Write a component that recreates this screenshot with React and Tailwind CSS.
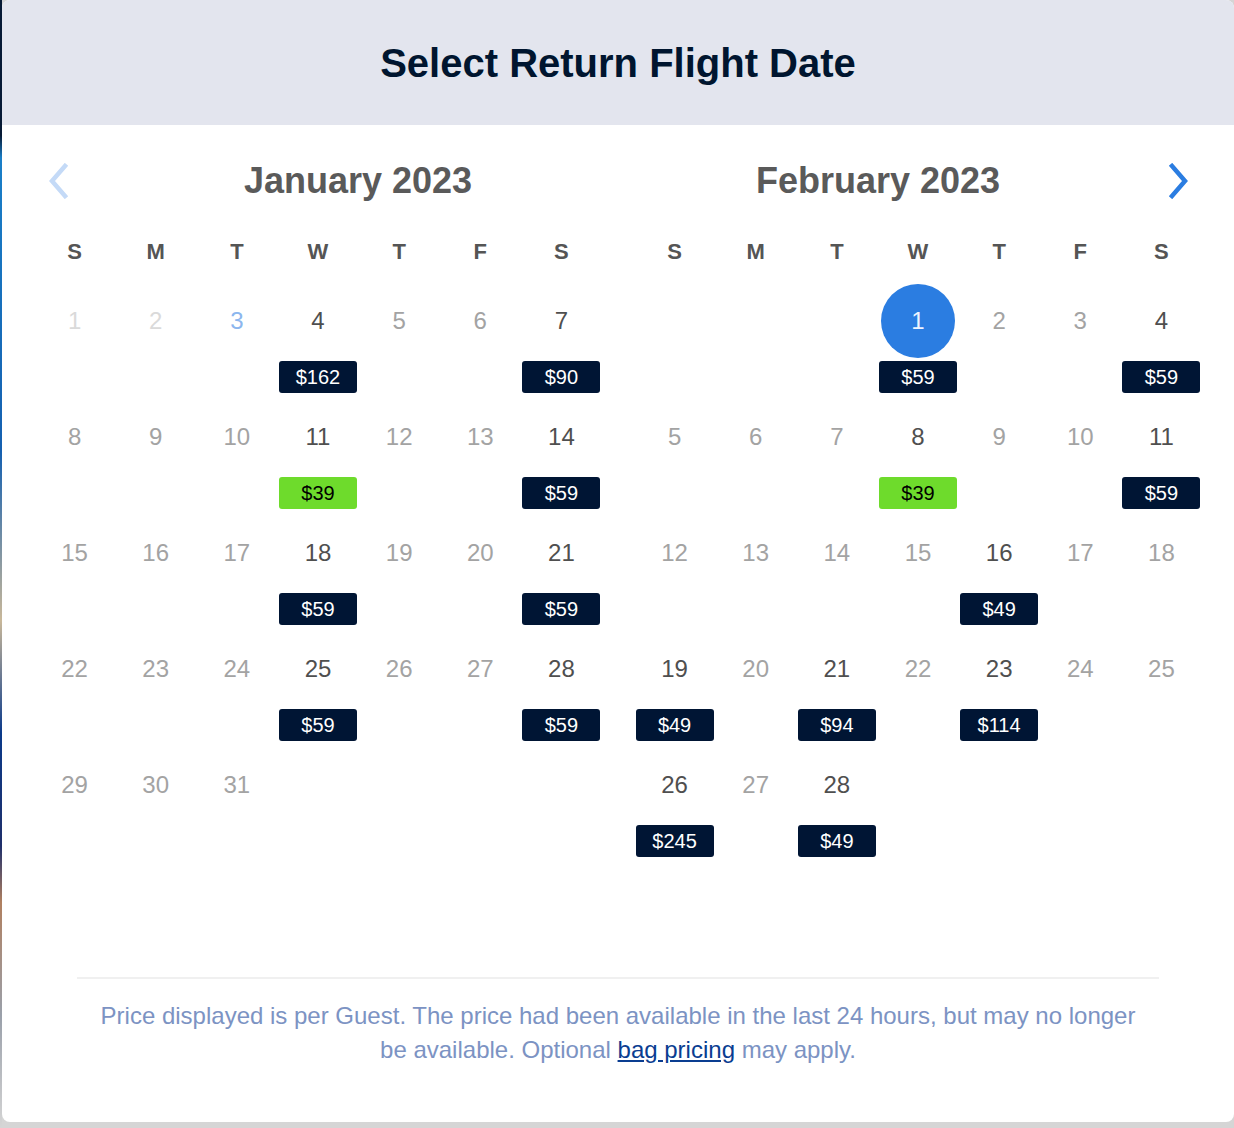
import React from "react";

const jan = [
  [
    { d: 1, s: "past" },
    { d: 2, s: "past" },
    { d: 3, s: "today" },
    { d: 4, p: "$162" },
    { d: 5 },
    { d: 6 },
    { d: 7, p: "$90" },
  ],
  [
    { d: 8 },
    { d: 9 },
    { d: 10 },
    { d: 11, p: "$39", g: true },
    { d: 12 },
    { d: 13 },
    { d: 14, p: "$59" },
  ],
  [
    { d: 15 },
    { d: 16 },
    { d: 17 },
    { d: 18, p: "$59" },
    { d: 19 },
    { d: 20 },
    { d: 21, p: "$59" },
  ],
  [
    { d: 22 },
    { d: 23 },
    { d: 24 },
    { d: 25, p: "$59" },
    { d: 26 },
    { d: 27 },
    { d: 28, p: "$59" },
  ],
  [{ d: 29 }, { d: 30 }, { d: 31 }, null, null, null, null],
];

const feb = [
  [
    null,
    null,
    null,
    { d: 1, p: "$59", sel: true },
    { d: 2 },
    { d: 3 },
    { d: 4, p: "$59" },
  ],
  [
    { d: 5 },
    { d: 6 },
    { d: 7 },
    { d: 8, p: "$39", g: true },
    { d: 9 },
    { d: 10 },
    { d: 11, p: "$59" },
  ],
  [
    { d: 12 },
    { d: 13 },
    { d: 14 },
    { d: 15 },
    { d: 16, p: "$49" },
    { d: 17 },
    { d: 18 },
  ],
  [
    { d: 19, p: "$49" },
    { d: 20 },
    { d: 21, p: "$94" },
    { d: 22 },
    { d: 23, p: "$114" },
    { d: 24 },
    { d: 25 },
  ],
  [{ d: 26, p: "$245" }, { d: 27 }, { d: 28, p: "$49" }, null, null, null, null],
];

const dayNames = ["S", "M", "T", "W", "T", "F", "S"];

function Chevron({ dir, color }) {
  return (
    <svg width="24" height="36" viewBox="0 0 24 36" fill="none">
      <path
        d={dir === "left" ? "M19 3 L6 18 L19 33" : "M5 3 L18 18 L5 33"}
        stroke={color}
        strokeWidth="4.5"
        strokeLinecap="square"
        strokeLinejoin="miter"
      />
    </svg>
  );
}

function Cell({ c }) {
  if (!c) return <div className="h-[116px]" />;
  let numCls = "text-[#a3a3a3]";
  if (c.s === "past") numCls = "text-[#dadada]";
  if (c.s === "today") numCls = "text-[#8cb6ee]";
  if (c.p) numCls = "text-[#4f4f4f]";
  return (
    <div className="h-[116px] flex flex-col items-center">
      {c.sel ? (
        <div className="w-[74px] h-[74px] rounded-full bg-[#2b7de1] flex items-center justify-center text-[24px] text-[#eef4ff]">
          {c.d}
        </div>
      ) : (
        <div className={`h-[74px] flex items-center justify-center text-[24px] ${numCls}`}>
          {c.d}
        </div>
      )}
      {c.p && (
        <div
          className={`mt-[3px] w-[78px] h-[32px] rounded-[3px] flex items-center justify-center text-[20px] ${
            c.g ? "bg-[#6edb2c] text-black" : "bg-[#001534] text-white"
          }`}
        >
          {c.p}
        </div>
      )}
    </div>
  );
}

function Month({ title, rows, side }) {
  return (
    <div className="w-[568px] flex flex-col">
      <div className="h-[44px] flex items-center">
        {side === "left" && (
          <div className="w-[80px] flex justify-start pl-[12px]">
            <Chevron dir="left" color="#c4daf7" />
          </div>
        )}
        <div className="flex-1 text-center text-[36px] font-bold text-[#5a5a5a] leading-none">
          {title}
        </div>
        {side === "right" && (
          <div className="w-[80px] flex justify-end pr-[11px]">
            <Chevron dir="right" color="#2b7de1" />
          </div>
        )}
      </div>
      <div className="mt-[32px] grid grid-cols-7 h-[30px] items-center">
        {dayNames.map((n, i) => (
          <div key={i} className="text-center text-[22px] font-bold text-[#555555]">
            {n}
          </div>
        ))}
      </div>
      <div className="mt-[19px] grid grid-cols-7">
        {rows.flat().map((c, i) => (
          <Cell key={i} c={c} />
        ))}
      </div>
    </div>
  );
}

export default function App() {
  return (
    <div
      className="w-[1234px] h-[1128px] flex bg-[#d5d5d5] overflow-hidden"
      style={{ fontFamily: '"Liberation Sans", Arial, sans-serif' }}
    >
      <div className="w-[2px] h-full bg-[linear-gradient(to_bottom,#071a35_0%,#071a35_12%,#1a7fc8_14%,#1560b0_40%,#c9b89a_55%,#0b3a8a_65%,#1f2f6a_75%,#b08060_80%,#9aa0aa_90%,#d5d5d5_100%)]" />
      <div className="w-[1232px] h-[1122px] bg-white rounded-[8px] overflow-hidden flex flex-col">
        <div className="h-[125px] bg-[#e3e5ee] flex items-center justify-center">
          <h1 className="text-[40px] font-bold text-[#00152f] leading-none">
            Select Return Flight Date
          </h1>
        </div>
        <div className="pt-[34px] px-[32px] flex gap-[32px]">
          <Month title="January 2023" rows={jan} side="left" />
          <Month title="February 2023" rows={feb} side="right" />
        </div>
        <div className="mx-[75px] mt-[113px] border-t-2 border-[#f0f0f0]">
          <p className="pt-[20px] px-[20px] text-center text-[24px] leading-[34px] text-[#7c93c3]">
            Price displayed is per Guest. The price had been available in the last 24 hours, but may no longer be available. Optional{" "}
            <a href="#" className="underline text-[#0a3d91]">
              bag pricing
            </a>{" "}
            may apply.
          </p>
        </div>
      </div>
    </div>
  );
}
